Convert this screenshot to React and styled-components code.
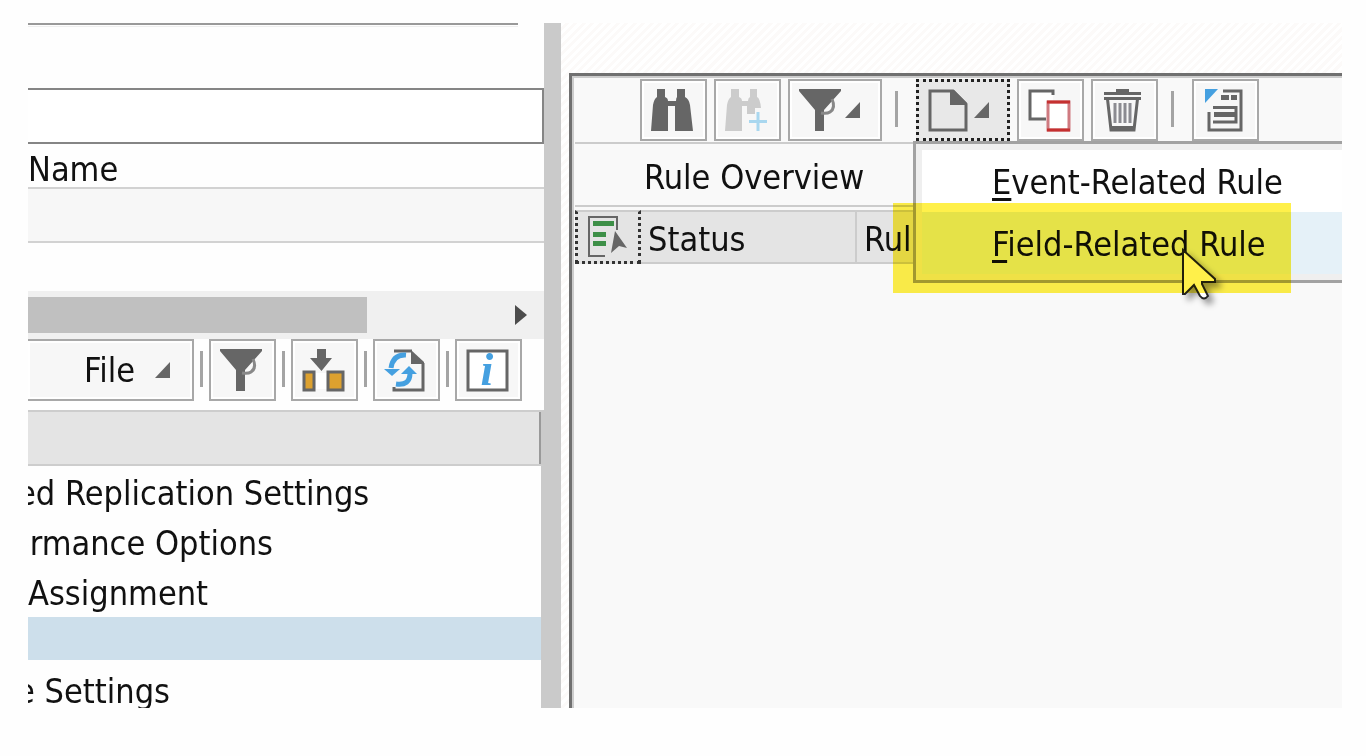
import React from 'react';
import styled, { createGlobalStyle, css } from 'styled-components';

const GlobalStyle = createGlobalStyle`
  *, *::before, *::after { box-sizing: border-box; }
  body {
    margin: 0;
    background: #fefefe;
    color: #111;
    font-family: "DejaVu Sans Condensed", "DejaVu Sans", sans-serif;
    font-size: 34px;
    line-height: 40px;
  }
  button, input { font: inherit; color: inherit; border-radius: 0; }
`;

const Page = styled.div`
  height: 100vh;
  min-height: 400px;
  padding: 23px 24px 48px 28px;
`;

const Workspace = styled.div`
  display: grid;
  grid-template-columns: minmax(0, 516fr) 17px minmax(0, 781fr);
  grid-template-rows: minmax(0, 1fr);
  height: 100%;
  overflow: hidden;
`;

const LeftPane = styled.div`
  display: flex;
  flex-direction: column;
  overflow: hidden;
`;

const Splitter = styled.div`
  background: #cacaca;
`;

const TopField = styled.div`
  flex: none;
  height: 4px;
  margin: 0 26px 61px 0;
  border-top: 2px solid #999;
  border-bottom: 1px solid #eee;
`;

const TextField = styled.input`
  flex: none;
  width: 100%;
  height: 56px;
  padding: 0 8px;
  border: 2px solid #858585;
  border-left: 0;
  background: #fff;
  outline: none;
`;

const NameLabel = styled.label`
  flex: none;
  height: 45px;
  padding-top: 5px;
  border-bottom: 2px solid #d2d2d2;
  line-height: 40px;
`;

const GridLine = styled.div`
  flex: none;
  height: ${(p) => (p.$shaded ? 54 : 48)}px;
  background: ${(p) => (p.$shaded ? '#f7f7f7' : '#fefefe')};
  border-bottom: ${(p) => (p.$shaded ? '2px solid #d2d2d2' : '0')};
`;

const ScrollTrack = styled.div`
  flex: none;
  display: flex;
  align-items: center;
  justify-content: space-between;
  height: 48px;
  padding-right: 17px;
  background: #f0f0f0;
`;

const ScrollThumb = styled.div`
  width: 68%;
  height: 36px;
  background: #c0c0c0;
`;

const LeftTools = styled.div`
  flex: none;
  display: flex;
  align-items: flex-start;
  height: 71px;
`;

const ToolButton = styled.button`
  flex: none;
  display: flex;
  align-items: center;
  gap: 3px;
  width: ${(p) => (p.$menu ? 94 : 67)}px;
  height: 62px;
  padding: 0 0 0 9px;
  border: 2px solid #a8a8a8;
  background: #f7f7f7;
  box-shadow: inset 0 0 0 2px #fff;
  ${(p) =>
    p.$active &&
    css`
      background: #e8e8e8;
      border: 3px dotted #222;
      box-shadow: none;
    `}
`;

const FileButton = styled(ToolButton)`
  width: 166px;
  justify-content: flex-end;
  gap: 20px;
  padding: 0 21px 0 0;
  border-left: 0;
`;

const ToolSeparator = styled.span`
  flex: none;
  width: 3px;
  height: 36px;
  margin: 12px 6px 0;
  background: #a4a4a4;
`;

const TreeHeader = styled.div`
  flex: none;
  height: 56px;
  border: solid #cdcdcd;
  border-width: 2px 3px 2px 0;
  border-right-color: #cacaca;
  background: #e4e4e4;
  box-shadow: inset -2px 0 0 #999;
`;

const Tree = styled.ul`
  flex: 1;
  min-height: 0;
  margin: 0;
  padding: 1px 0 0;
  border-right: 3px solid #cacaca;
  overflow: hidden;
  list-style: none;
`;

const TreeRow = styled.li`
  height: ${(p) => (p.$selected ? 43 : 50)}px;
  margin-bottom: ${(p) => (p.$selected ? 5 : 0)}px;
  background: ${(p) => (p.$selected ? '#cddfeb' : 'transparent')};
  line-height: 52px;
  white-space: nowrap;
  text-indent: -${(p) => p.$scrolled || 0}px;
`;

const RightPane = styled.div`
  display: flex;
  min-width: 0;
  padding: 50px 0 0 8px;
  overflow: hidden;
  background: repeating-linear-gradient(135deg, #fff 0 3px, #fcfaf9 3px 6px);
`;

const RulePanel = styled.section`
  flex: 1;
  min-width: 0;
  border: solid #707070;
  border-width: 3px 0 0 3px;
  padding-top: 3px;
  background: #f9f9f9;
  box-shadow: inset 2px 2px 0 #ccc;
`;

const RuleTools = styled.div`
  display: flex;
  gap: 7px;
  height: 65px;
  margin-left: 3px;
  padding-left: 65px;
  border-bottom: 2px solid #ccc;
`;

const SeparatorSlot = styled.span`
  display: flex;
  margin-right: 5px;
`;

const MenuAnchor = styled.div`
  position: relative;
`;

const Menu = styled.div`
  position: absolute;
  z-index: 1;
  top: 62px;
  left: -3px;
  width: 460px;
  padding: 6px;
  border: 3px solid #a2a2a2;
  background: #efefef;
`;

const MenuItem = styled.button`
  display: block;
  width: 100%;
  height: 62px;
  padding: 2px 0 0 70px;
  border: 0;
  background: ${(p) => (p.$hover ? '#e5f1f8' : '#fff')};
  text-align: left;
  white-space: nowrap;
`;

const AccessKey = styled.span`
  text-decoration: underline;
  text-decoration-thickness: 3px;
  text-underline-offset: 4px;
`;

const Marker = styled.div`
  position: absolute;
  z-index: 3;
  top: 124px;
  left: -23px;
  width: 398px;
  height: 90px;
  background: #fff04a;
  mix-blend-mode: multiply;
`;

const Pointer = styled.svg`
  position: absolute;
  z-index: 2;
  top: 168px;
  left: 265px;
  filter: drop-shadow(5px 5px 3px rgba(0, 0, 0, 0.4));
  pointer-events: none;
`;

const PanelTitle = styled.h2`
  height: 63px;
  margin: 0 0 3px 3px;
  padding: 13px 0 0 69px;
  border-bottom: 2px solid #ccc;
  font-size: 34px;
  font-weight: normal;
  line-height: 40px;
`;

const RuleTable = styled.table`
  width: calc(100% - 3px);
  margin-left: 3px;
  table-layout: fixed;
  border-collapse: separate;
  border-spacing: 0;
`;

const HeadCell = styled.th`
  width: ${(p) => p.$width || 'auto'};
  height: 54px;
  padding: ${(p) => (p.$corner ? '0 0 0 9px' : '4px 0 0 7px')};
  overflow: hidden;
  background: #e4e4e4;
  border: solid #ccc;
  border-width: 2px 2px 2px 0;
  font-weight: normal;
  text-align: left;
  white-space: nowrap;
  ${(p) =>
    p.$corner &&
    css`
      border: 3px dotted #333;
      border-top: 2px solid #ccc;
    `}
`;

const Glyph = styled.svg`
  flex: none;
  display: block;
  overflow: visible;
`;

const ink = '#666';
const blue = '#45a0e0';

const Icon = ({ children }) => (
  <Glyph width="43" height="43" viewBox="0 0 43 43" fill="none" aria-hidden="true">
    {children}
  </Glyph>
);

const MenuArrow = () => (
  <Glyph width="16" height="17" viewBox="0 0 16 17" aria-hidden="true">
    <path d="M0 16L15 0V16Z" fill={ink} />
  </Glyph>
);

const Binoculars = () => (
  <Icon>
    <path d="M6 0H14V8Q17 9 17 12H25Q25 9 26 8V0H34V8Q38 10 39 16L42 42H24V17H17V42H0L2 16Q3 10 6 8Z" fill={ink} />
  </Icon>
);

const BinocularsPlus = () => (
  <Icon>
    <path d="M6 0H14V8Q17 9 17 12H23Q23 9 25 8V0H32V8Q35 9 36 19H30V25H22V17H17V42H0L2 16Q3 10 6 8Z" fill="#ccc" />
    <path d="M24 32.500H42M33 23V42" stroke="#a9d7ef" strokeWidth="3" />
  </Icon>
);

const Funnel = () => (
  <Icon>
    <path d="M0 0H42V2L25 21V42H16V21L0 2Z" fill={ink} />
    <path d="M33 10Q37 19 31 23Q28 25 22 24" stroke="#888" strokeWidth="3" />
  </Icon>
);

const NewPage = () => (
  <Icon>
    <path d="M2 2H25L38 15V41H2Z" stroke={ink} strokeWidth="3" />
    <path d="M22 1H26L39 14V16H22Z" fill={ink} />
  </Icon>
);

const Copy = () => (
  <Icon>
    <path d="M2 2H25V30H2Z" fill="#fff" />
    <path d="M25 6V2H2V30H18" stroke={ink} strokeWidth="3" />
    <path d="M20 13H41V41H20Z" fill="#fff" stroke="#cf7a80" strokeWidth="3" />
    <path d="M19 13H42M19 41H42" stroke="#c53030" strokeWidth="3" />
  </Icon>
);

const Trash = () => (
  <Icon>
    <path d="M14 0H27V3H39V6H2V3H14ZM2 8H39V11H2Z" fill={ink} />
    <path d="M5.500 10L9 41H32L35.500 10" stroke={ink} strokeWidth="3" />
    <path d="M9 37H33V42H9Z" fill={ink} />
    <path d="M13 14V34M18 14V34M23 14V34M28 14V34" stroke="#8b8b91" strokeWidth="3" />
  </Icon>
);

const Layout = () => (
  <Icon>
    <path d="M2 0H15L2 14Z" fill={blue} />
    <path d="M20 2H38V41H6V23" stroke={ink} strokeWidth="3" />
    <path d="M18 6H26V11H18ZM28 6H34V11H28ZM11 23H33V28H11Z" fill={ink} />
    <path d="M10 18.500H33V33H10" stroke={ink} strokeWidth="3" />
  </Icon>
);

const Import = () => (
  <Icon>
    <path d="M15 0H24V9H30L19.500 22L8 9H15Z" fill={ink} />
    <path d="M14 24H25V40H14Z" fill="#fff" />
    <path d="M2 23H12V41H2ZM26 23H41V41H26Z" fill="#dda12f" stroke={ink} strokeWidth="3" />
  </Icon>
);

const RefreshPage = () => (
  <Icon>
    <path d="M10 2H28M39 14V41H10V38" stroke={ink} strokeWidth="3" />
    <path d="M27 1L40 13V15H27Z" fill={ink} />
    <path d="M22 6Q9 5 7 19" stroke={blue} strokeWidth="5" />
    <path d="M0 20H16L8 27Z" fill={blue} />
    <path d="M12 35Q26 37 26 24" stroke={blue} strokeWidth="5" />
    <path d="M17 25L25 17L33 25Z" fill={blue} />
  </Icon>
);

const Info = () => (
  <Icon>
    <path d="M2 2H41V41H2Z" fill="#fff" stroke={ink} strokeWidth="3" />
    <text x="21" y="36" textAnchor="middle" fontFamily="Liberation Serif, serif" fontSize="46" fontWeight="bold" fontStyle="italic" fill={blue}>
      i
    </text>
  </Icon>
);

const SelectList = () => (
  <Icon>
    <path d="M30 15V2H2V41H18" stroke={ink} strokeWidth="2" />
    <path d="M6 6H27V11H6ZM6 17H19V22H6ZM6 26H19V31H6Z" fill="#3d8f47" />
    <path d="M28 16L40 33L32 31L24 38Z" fill={ink} />
  </Icon>
);

const TREE = [
  { text: 'ed Replication Settings', scrolled: 11 },
  { text: 'ormance Options', scrolled: 17 },
  { text: 'Assignment' },
  { text: '', selected: true },
  { text: 'e Settings', scrolled: 12 },
];

const LEFT_TOOLS = [
  { label: 'Filter', icon: Funnel },
  { label: 'Import', icon: Import },
  { label: 'Refresh', icon: RefreshPage },
  { label: 'Information', icon: Info },
];

export default function App() {
  return (
    <>
      <GlobalStyle />
      <Page>
        <Workspace>
          <LeftPane>
            <TopField />
            <TextField id="name" />
            <NameLabel htmlFor="name">Name</NameLabel>
            <GridLine $shaded />
            <GridLine />
            <ScrollTrack>
              <ScrollThumb />
              <Glyph width="12" height="20" viewBox="0 0 12 20" aria-hidden="true">
                <path d="M0 0L12 10L0 20Z" fill="#4c4c4c" />
              </Glyph>
            </ScrollTrack>
            <LeftTools>
              <FileButton>
                File
                <MenuArrow />
              </FileButton>
              {LEFT_TOOLS.map(({ label, icon: ToolIcon }) => (
                <React.Fragment key={label}>
                  <ToolSeparator />
                  <ToolButton aria-label={label}>
                    <ToolIcon />
                  </ToolButton>
                </React.Fragment>
              ))}
            </LeftTools>
            <TreeHeader />
            <Tree>
              {TREE.map((row, i) => (
                <TreeRow key={i} $selected={row.selected} $scrolled={row.scrolled}>
                  {row.text}
                </TreeRow>
              ))}
            </Tree>
          </LeftPane>
          <Splitter />
          <RightPane>
            <RulePanel>
              <RuleTools>
                <ToolButton aria-label="Find"><Binoculars /></ToolButton>
                <ToolButton aria-label="Find next"><BinocularsPlus /></ToolButton>
                <ToolButton aria-label="Filter" $menu><Funnel /><MenuArrow /></ToolButton>
                <SeparatorSlot>
                  <ToolSeparator />
                </SeparatorSlot>
                <MenuAnchor>
                  <ToolButton aria-label="Create" $menu $active><NewPage /><MenuArrow /></ToolButton>
                  <Menu>
                    <MenuItem><AccessKey>E</AccessKey>vent-Related Rule</MenuItem>
                    <MenuItem $hover><AccessKey>F</AccessKey>ield-Related Rule</MenuItem>
                  </Menu>
                  <Pointer width="36" height="56" viewBox="0 0 36 56" aria-hidden="true">
                    <path d="M2 3V47H4L13 38L19 49Q23 54 27 49L21 37V35H34V32Z" fill="#fff" stroke="#222" strokeWidth="2" />
                  </Pointer>
                  <Marker />
                </MenuAnchor>
                <ToolButton aria-label="Copy"><Copy /></ToolButton>
                <ToolButton aria-label="Delete"><Trash /></ToolButton>
                <SeparatorSlot>
                  <ToolSeparator />
                </SeparatorSlot>
                <ToolButton aria-label="Layout"><Layout /></ToolButton>
              </RuleTools>
              <PanelTitle>Rule Overview</PanelTitle>
              <RuleTable>
                <thead>
                  <tr>
                    <HeadCell $width="66px" $corner aria-label="Select"><SelectList /></HeadCell>
                    <HeadCell $width="216px">Status</HeadCell>
                    <HeadCell>Rule</HeadCell>
                  </tr>
                </thead>
              </RuleTable>
            </RulePanel>
          </RightPane>
        </Workspace>
      </Page>
    </>
  );
}
